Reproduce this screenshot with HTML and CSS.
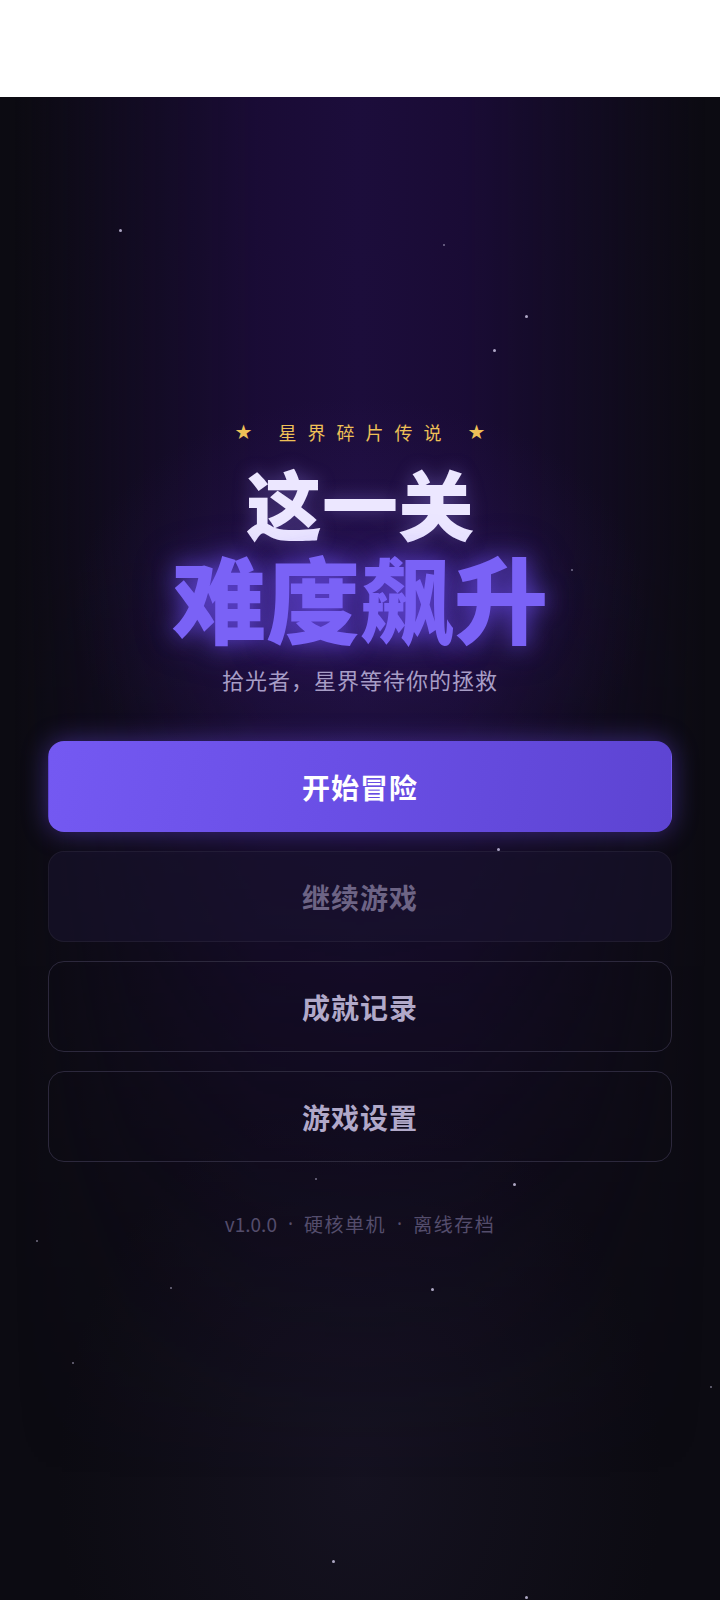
FILE: index.html
```html
<!DOCTYPE html>
<html lang="zh-CN">
<head>
<meta charset="utf-8">
<title>这一关 难度飙升</title>
<link rel="stylesheet" href="styles.css">
</head>
<body>
<div class="topbar"></div>
<main class="screen">
  <div class="stars">
    <i class="star s1"></i><i class="star s2"></i><i class="star s3"></i><i class="star s4 faint"></i>
    <i class="star s5 faint"></i><i class="star s6"></i><i class="star s7 faint"></i><i class="star s8"></i>
    <i class="star s9 faint"></i><i class="star s10 faint"></i><i class="star s11"></i><i class="star s12 faint"></i>
    <i class="star s13 faint"></i><i class="star s14"></i><i class="star s15"></i>
  </div>
  <div class="content">
    <div class="eyebrow"><span class="pip">★</span><span class="eyebrow-text">星界碎片传说</span><span class="pip">★</span></div>
    <h1 class="title">
      <span class="title-top">这一关</span>
      <span class="title-main">难度飙升</span>
    </h1>
    <p class="tagline">拾光者，星界等待你的拯救</p>
    <nav class="menu">
      <button class="btn btn-primary">开始冒险</button>
      <button class="btn btn-disabled">继续游戏</button>
      <button class="btn btn-ghost">成就记录</button>
      <button class="btn btn-ghost">游戏设置</button>
    </nav>
    <p class="footer"><span class="ver">v1.0.0</span><span class="sep">·</span><span>硬核单机</span><span class="sep">·</span><span>离线存档</span></p>
  </div>
</main>
</body>
</html>
```

FILE: styles.css
```css
html, body {
  margin: 0;
  padding: 0;
  background: #ffffff;
}
body {
  font-family: "Noto Sans CJK SC", "Noto Sans", sans-serif;
}
.topbar {
  height: 97px;
  background: #ffffff;
}
.screen {
  position: relative;
  height: 1503px;
  overflow: hidden;
  background:
    radial-gradient(ellipse 42% 26% at 50% 92%, rgba(34, 28, 54, 0.4) 0%, rgba(20, 16, 32, 0) 100%),
    #0c0b12;
}
.screen::before {
  content: "";
  position: absolute;
  inset: 0;
  background: linear-gradient(90deg, rgba(22, 12, 40, 0) 2%, rgba(22, 12, 44, 0.6) 18%, rgba(27, 12, 56, 0.95) 36%, #1c0d3b 50%, rgba(27, 12, 56, 0.95) 64%, rgba(22, 12, 44, 0.6) 82%, rgba(22, 12, 40, 0) 98%);
  -webkit-mask-image: linear-gradient(180deg, #000 0%, #000 30%, rgba(0, 0, 0, 0.55) 55%, rgba(0, 0, 0, 0.2) 75%, rgba(0, 0, 0, 0) 92%);
  mask-image: linear-gradient(180deg, #000 0%, #000 30%, rgba(0, 0, 0, 0.55) 55%, rgba(0, 0, 0, 0.2) 75%, rgba(0, 0, 0, 0) 92%);
}
.screen::after {
  content: "";
  position: absolute;
  left: 10%;
  right: 10%;
  top: 300px;
  height: 420px;
  background: radial-gradient(ellipse 50% 50% at 50% 50%, rgba(58, 30, 120, 0.35) 0%, rgba(40, 20, 90, 0) 100%);
}
.stars {
  position: absolute;
  inset: 0;
  z-index: 1;
  pointer-events: none;
}
.star {
  position: absolute;
  width: 3px;
  height: 3px;
  border-radius: 50%;
  background: #c9c2e0;
  opacity: 0.85;
}
.star.faint { width: 2px; height: 2px; opacity: 0.55; }
.s1 { left: 119px; top: 132px; }
.s2 { left: 525px; top: 218px; }
.s3 { left: 493px; top: 252px; }
.s4 { left: 443px; top: 147px; }
.s5 { left: 571px; top: 472px; }
.s6 { left: 497px; top: 751px; }
.s7 { left: 315px; top: 1081px; }
.s8 { left: 513px; top: 1086px; }
.s9 { left: 36px; top: 1143px; }
.s10 { left: 170px; top: 1190px; }
.s11 { left: 431px; top: 1191px; }
.s12 { left: 72px; top: 1265px; }
.s13 { left: 710px; top: 1289px; }
.s14 { left: 332px; top: 1463px; }
.s15 { left: 525px; top: 1499px; }

.content {
  position: relative;
  z-index: 2;
  display: flex;
  flex-direction: column;
  align-items: center;
  padding: 323px 48px 0;
}
.eyebrow {
  display: flex;
  align-items: center;
  gap: 26px;
  height: 24px;
  color: #eec057;
  font-size: 18px;
  line-height: 24px;
}
.pip {
  font-family: "DejaVu Sans", sans-serif;
  font-size: 20px;
}
.eyebrow-text {
  letter-spacing: 11px;
  margin-right: -11px;
}
.title {
  margin: 20px 0 0;
  display: flex;
  flex-direction: column;
  align-items: center;
  font-weight: 900;
  line-height: 1;
}
.title-top {
  font-size: 76px;
  color: #ece7ff;
  text-shadow: 0 0 18px rgba(160, 140, 255, 0.35);
}
.title-main {
  margin-top: 9px;
  font-size: 94px;
  color: #7a62f6;
  text-shadow: 0 0 22px rgba(110, 80, 245, 0.7), 0 0 44px rgba(110, 80, 245, 0.35);
}
.tagline {
  margin: 21px 0 0;
  font-size: 22px;
  line-height: 30px;
  letter-spacing: 1px;
  color: #a79dc6;
}
.menu {
  margin-top: 47px;
  width: 100%;
  display: flex;
  flex-direction: column;
  gap: 19px;
}
.btn {
  box-sizing: border-box;
  height: 91px;
  border-radius: 16px;
  font-family: inherit;
  font-size: 28px;
  font-weight: 700;
  letter-spacing: 1px;
  border: 1px solid transparent;
  background: transparent;
  cursor: pointer;
}
.btn-primary {
  color: #ffffff;
  background: linear-gradient(100deg, #7459f2 0%, #6a4fe6 45%, #5d44d2 100%);
  box-shadow: 0 0 26px rgba(112, 80, 240, 0.45);
}
.btn-disabled {
  color: #6d6485;
  background: rgba(26, 20, 48, 0.55);
  border-color: rgba(255, 255, 255, 0.05);
}
.btn-ghost {
  color: #b1a9c9;
  border-color: #2c283c;
}
.footer {
  margin: 50px 0 0;
  font-size: 19px;
  line-height: 24px;
  letter-spacing: 1.5px;
  color: #544d6c;
  display: flex;
  align-items: center;
}
.footer .ver { letter-spacing: 0; }
.footer .sep {
  font-family: "Noto Sans", sans-serif;
  letter-spacing: 0;
  margin: 0 11px;
}
```
